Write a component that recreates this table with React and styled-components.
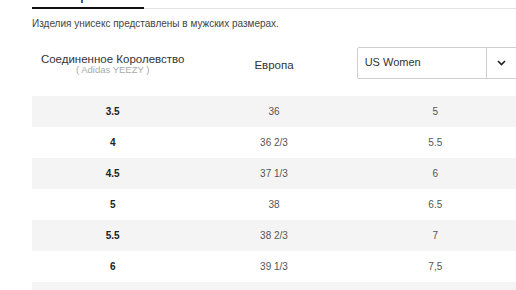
import React from "react";
import styled, { createGlobalStyle } from "styled-components";

const GlobalStyle = createGlobalStyle`
  html, body {
    margin: 0;
    padding: 0;
    background: #fff;
    overflow: hidden;
  }
  body {
    font-family: "Liberation Sans", Arial, sans-serif;
    color: #222;
  }
`;

const Page = styled.div`
  margin-top: -11px;
  padding-left: 32px;
`;

const TabBar = styled.div`
  display: flex;
  border-bottom: 1px solid #e3e3e3;
`;

const Tab = styled.div`
  width: 112px;
  font-size: 12px;
  font-weight: 700;
  line-height: 14px;
  text-transform: uppercase;
  white-space: nowrap;
  letter-spacing: 0.3px;
  padding-bottom: 4px;
  border-bottom: 2px solid #111;
  margin-bottom: -1px;
`;

const Note = styled.p`
  margin: 8px 0 0;
  font-size: 10px;
  line-height: 14px;
  color: #444;
`;

const Table = styled.div`
  width: 484px;
`;

const HeaderRow = styled.div`
  display: grid;
  grid-template-columns: repeat(3, minmax(0, 1fr));
  align-items: center;
  height: 32px;
  margin: 16px 0 17px;
`;

const HeaderCell = styled.div`
  text-align: center;
  white-space: nowrap;
  margin-top: ${({ $shift }) => $shift || 0}px;
`;

const HeaderTitle = styled.div`
  font-size: 11.5px;
  line-height: 11px;
  color: #333;
`;

const HeaderSub = styled.div`
  font-size: 9.5px;
  line-height: 10px;
  color: #aaa;
`;

const Select = styled.div`
  display: flex;
  align-items: stretch;
  width: 200px;
  height: 32px;
  margin-left: 2px;
  box-sizing: border-box;
  border: 1px solid #cfcfcf;
  border-radius: 2px;
  background: #fff;
`;

const SelectValue = styled.div`
  box-sizing: border-box;
  flex: none;
  width: 128px;
  padding-left: 7px;
  font-size: 11px;
  line-height: 28px;
  color: #333;
`;

const SelectArrow = styled.div`
  flex: none;
  width: 30px;
  border-left: 1px solid #cfcfcf;
  display: flex;
  align-items: center;
  justify-content: center;
`;

const Row = styled.div`
  display: grid;
  grid-template-columns: repeat(3, minmax(0, 1fr));
  align-items: center;
  height: 31px;
  background: ${({ $shaded }) => ($shaded ? "#f4f4f4" : "#fff")};
`;

const Cell = styled.div`
  text-align: center;
  font-size: 10px;
  font-weight: ${({ $bold }) => ($bold ? 700 : 400)};
  color: ${({ $bold }) => ($bold ? "#222" : "#555")};
`;

const sizes = [
  ["3.5", "36", "5"],
  ["4", "36 2/3", "5.5"],
  ["4.5", "37 1/3", "6"],
  ["5", "38", "6.5"],
  ["5.5", "38 2/3", "7"],
  ["6", "39 1/3", "7,5"],
  ["6.5", "40", "8"],
];

const App = () => (
  <>
    <GlobalStyle />
    <Page>
      <TabBar>
        <Tab>Таблица размеров</Tab>
      </TabBar>
      <Note>Изделия унисекс представлены в мужских размерах.</Note>
      <Table>
        <HeaderRow>
          <HeaderCell $shift={2}>
            <HeaderTitle>Соединенное Королевство</HeaderTitle>
            <HeaderSub>( Adidas YEEZY )</HeaderSub>
          </HeaderCell>
          <HeaderCell $shift={5}>
            <HeaderTitle>Европа</HeaderTitle>
          </HeaderCell>
          <Select>
            <SelectValue>US Women</SelectValue>
            <SelectArrow>
              <svg width="9" height="6" viewBox="0 0 9 6">
                <path d="M1 1l3.5 3.5L8 1" fill="none" stroke="#222" strokeWidth="1.6" />
              </svg>
            </SelectArrow>
          </Select>
        </HeaderRow>
        {sizes.map(([uk, eu, us], i) => (
          <Row key={uk} $shaded={i % 2 === 0}>
            <Cell $bold>{uk}</Cell>
            <Cell>{eu}</Cell>
            <Cell>{us}</Cell>
          </Row>
        ))}
      </Table>
    </Page>
  </>
);

export default App;
